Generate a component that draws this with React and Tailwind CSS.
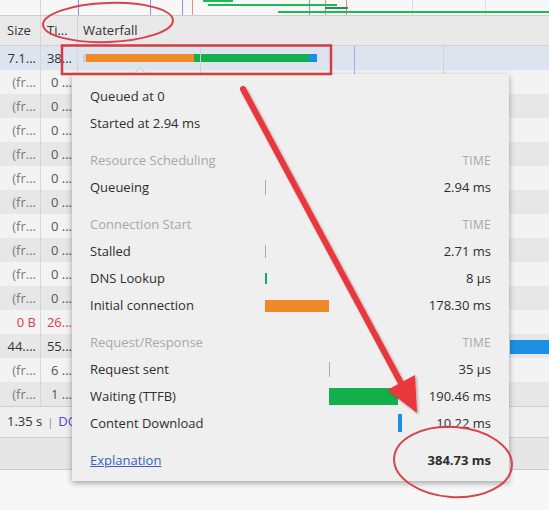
import React from "react";

const rows = [
  { size: "7.1...", time: "38...", sel: true },
  { size: "(fr...", time: "0 ..." },
  { size: "(fr...", time: "0 ..." },
  { size: "(fr...", time: "0 ..." },
  { size: "(fr...", time: "0 ..." },
  { size: "(fr...", time: "0 ..." },
  { size: "(fr...", time: "0 ..." },
  { size: "(fr...", time: "0 ..." },
  { size: "(fr...", time: "0 ..." },
  { size: "(fr...", time: "0 ..." },
  { size: "(fr...", time: "0 ..." },
  { size: "0 B", time: "26...", red: true },
  { size: "44....", time: "55...", dark: true, bar: true },
  { size: "(fr...", time: "6 ..." },
  { size: "(fr...", time: "1 ..." },
];

function TimingRow({ label, value, bar, bold }) {
  return (
    <div className="flex h-[27px] items-center">
      <div className="w-[175px] shrink-0">{label}</div>
      <div className="relative h-full flex-1">{bar}</div>
      <div className={"w-[90px] shrink-0 text-right " + (bold ? "font-bold" : "")}>{value}</div>
    </div>
  );
}

function Section({ title }) {
  return (
    <div className="mt-[10px] flex h-[27px] items-center text-[#a8a8a8]">
      <div className="flex-1">{title}</div>
      <div className="text-[12px] tracking-wide">TIME</div>
    </div>
  );
}

export default function App() {
  return (
    <div className="relative h-[510px] w-[549px] overflow-hidden bg-[#f6f6f6] font-['Open_Sans',sans-serif] text-[13px] text-[#333]">
      {/* overview strip */}
      <div className="relative h-[16px] border-b border-[#cdcdcd] bg-[#f7f7f7]">
        <div className="absolute left-[40px] top-0 h-full w-px bg-[#d6d6d6]" />
        <div className="absolute left-[78px] top-0 h-full w-px bg-[#8f8fe6]" />
        <div className="absolute left-[150px] top-0 h-full w-px bg-[#8f8fe6]" />
        <div className="absolute left-[182px] top-0 h-full w-px bg-[#8f8fe6]" />
        <div className="absolute left-[192px] top-0 h-full w-px bg-[#e88a8a]" />
        <div className="absolute left-[309px] top-0 h-full w-px bg-[#8f8fe6]" />
        <div className="absolute left-[325px] top-0 h-full w-px bg-[#e88a8a]" />
        <div className="absolute left-[346px] top-0 h-full w-px bg-[#e88a8a]" />
        <div className="absolute left-[412px] top-0 h-full w-px bg-[#dcdcdc]" />
        <div className="absolute left-[485px] top-0 h-full w-px bg-[#dcdcdc]" />
        <div className="absolute left-[203px] top-0 h-[2px] w-[30px] bg-[#1db954]" />
        <div className="absolute left-[208px] top-[4px] h-[2px] w-[129px] bg-[#1db954]" />
        <div className="absolute left-[325px] top-[7px] h-[2px] w-[23px] bg-[#2e8b57]" />
        <div className="absolute left-[278px] top-[11px] h-[2px] w-[271px] bg-[#1db954]" />
      </div>

      {/* header */}
      <div className="flex h-[30px] items-center border-b border-[#d0d0d0] bg-[#e9e9e9]">
        <div className="flex h-full w-[41px] items-center border-r border-[#d3d3d3] pl-[7px]">Size</div>
        <div className="flex h-full w-[37px] items-center border-r border-[#d3d3d3] pl-[6px]">Ti...</div>
        <div className="pl-[5px]">Waterfall</div>
      </div>

      {/* rows */}
      <div className="relative">
        {rows.map((r, i) => (
          <div
            key={i}
            className={
              "flex h-[24px] items-center " +
              (r.sel ? "bg-[#dde4f0]" : i % 2 === 1 ? "bg-[#f3f3f3]" : "bg-[#e7e7e7]")
            }
          >
            <div
              className={
                "w-[41px] border-r border-[#d6d6d6] pr-[4px] text-right leading-[24px] " +
                (r.red ? "text-[#d6404b]" : r.sel || r.dark ? "text-[#333]" : "text-[#7a7a7a]")
              }
            >
              {r.size}
            </div>
            <div
              className={
                "w-[37px] border-r border-[#d6d6d6] pr-[5px] text-right leading-[24px] " +
                (r.red ? "text-[#d6404b]" : r.sel || r.dark ? "text-[#333]" : "text-[#555]")
              }
            >
              {r.time}
            </div>
            <div className="relative h-full flex-1">
              {r.sel && (
                <div className="absolute left-[5px] top-[8px] flex h-[8px]">
                  <div className="w-[3px] bg-[#cfcfcf]" />
                  <div className="w-[108px] bg-[#f0892a]" />
                  <div className="w-[115px] bg-[#12b04a]" />
                  <div className="w-[8px] bg-[#1d8fe0]" />
                </div>
              )}
              {r.bar && <div className="absolute left-[432px] top-[6px] h-[14px] w-[60px] bg-[#1d8fe0]" />}
            </div>
          </div>
        ))}
        <div className="absolute left-[200px] top-0 h-full w-px bg-[#cfcfd6]" />
        <div className="absolute left-[354px] top-0 h-full w-px bg-[#a9a9e6]" />
        <div className="absolute left-[443px] top-0 h-full w-px bg-[#d2d2d8]" />
      </div>

      {/* status bar */}
      <div className="flex h-[31px] items-center border-t border-[#cfcfcf] bg-[#efefef] pl-[7px]">
        <span>1.35 s</span>
        <span className="mx-[5px] text-[11px] text-[#888]">|</span>
        <span className="text-[#4b4bc8]">DO</span>
      </div>
      <div className="h-[32px] border-t border-[#d0d0d0] bg-[#e6e6e6]" />
      <div className="h-[40px] border-t border-[#cbcbcb] bg-[#f7f7f7]" />

      {/* timing popover */}
      <div className="absolute left-[72px] top-[74px] w-[437px] bg-[#efefef] px-[18px] pb-[7px] pt-[9px] text-[#2e2e2e] shadow-[0_2px_6px_rgba(0,0,0,0.35)]">
        <div className="absolute -top-[5px] left-[63px] h-[10px] w-[10px] rotate-45 border-l border-t border-[#cfcfcf] bg-[#efefef]" />
        <div className="flex h-[27px] items-center">Queued at 0</div>
        <div className="flex h-[27px] items-center">Started at 2.94 ms</div>

        <Section title="Resource Scheduling" />
        <TimingRow
          label="Queueing"
          value="2.94 ms"
          bar={<div className="absolute left-0 top-[6px] h-[15px] w-px bg-[#aaa]" />}
        />

        <Section title="Connection Start" />
        <TimingRow
          label="Stalled"
          value="2.71 ms"
          bar={<div className="absolute left-0 top-[7px] h-[13px] w-px bg-[#aaa]" />}
        />
        <TimingRow
          label="DNS Lookup"
          value="8 µs"
          bar={<div className="absolute left-0 top-[8px] h-[11px] w-[2px] bg-[#16a085]" />}
        />
        <TimingRow
          label="Initial connection"
          value="178.30 ms"
          bar={<div className="absolute left-0 top-[8px] h-[12px] w-[64px] bg-[#f0892a]" />}
        />

        <Section title="Request/Response" />
        <TimingRow
          label="Request sent"
          value="35 µs"
          bar={<div className="absolute left-[64px] top-[6px] h-[15px] w-px bg-[#aaa]" />}
        />
        <TimingRow
          label="Waiting (TTFB)"
          value="190.46 ms"
          bar={<div className="absolute left-[64px] top-[5px] h-[17px] w-[69px] bg-[#12b04a]" />}
        />
        <TimingRow
          label="Content Download"
          value="10.22 ms"
          bar={<div className="absolute left-[133px] top-[4px] h-[18px] w-[4px] bg-[#1d8fe0]" />}
        />

        <div className="mt-[10px]">
          <TimingRow
            label={<a className="text-[#3a5fc0] underline">Explanation</a>}
            value="384.73 ms"
            bold
          />
        </div>
      </div>

      {/* annotations */}
      <svg className="pointer-events-none absolute inset-0" width="549" height="510" viewBox="0 0 549 510">
        <defs>
          <filter id="sh" x="-20%" y="-20%" width="140%" height="140%">
            <feDropShadow dx="1.5" dy="1.5" stdDeviation="1.2" floodColor="#000" floodOpacity="0.3" />
          </filter>
        </defs>
        <ellipse cx="108" cy="22.5" rx="65" ry="19.5" fill="none" stroke="#d6434a" strokeWidth="2" transform="rotate(-2 108 22.5)" />
        <rect x="62" y="45.5" width="269" height="28.5" fill="none" stroke="#d63b40" strokeWidth="2.5" />
        <ellipse cx="453" cy="462" rx="59" ry="35" fill="none" stroke="#d6434a" strokeWidth="2" transform="rotate(4 453 462)" />
        <g filter="url(#sh)">
          <line x1="243" y1="89" x2="402" y2="385" stroke="#e8383d" strokeWidth="6" strokeLinecap="round" />
          <polygon points="417,413 387,390 415,375" fill="#e8383d" />
        </g>
      </svg>
    </div>
  );
}
